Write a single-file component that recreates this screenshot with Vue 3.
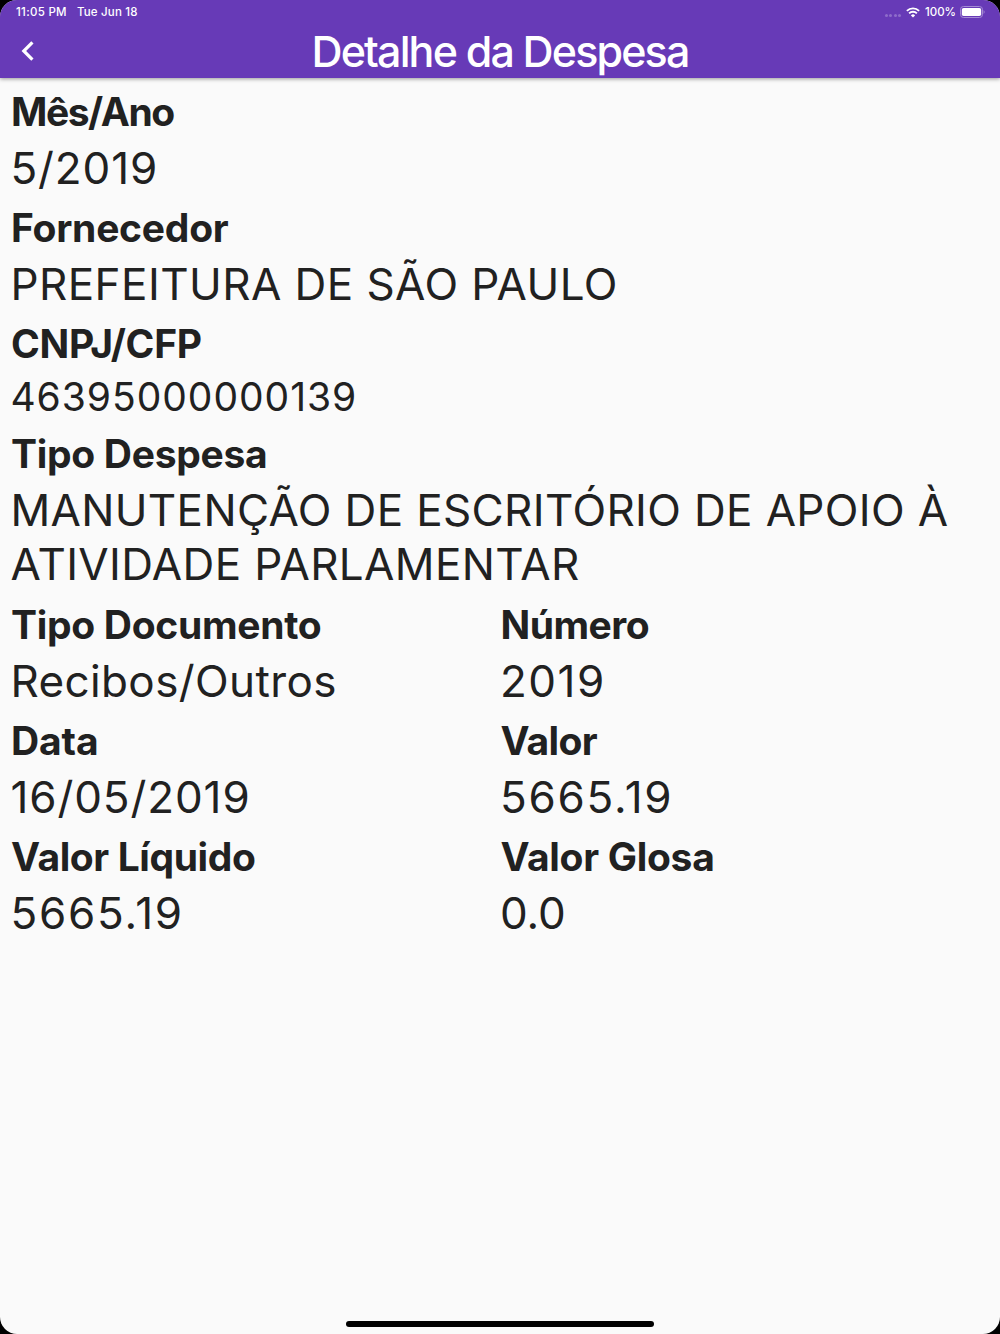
<template>
  <div class="screen">
    <header class="app-bar">
      <div class="status-bar">
        <div class="status-left">
          <span class="time">11:05 PM</span>
          <span class="date">Tue Jun 18</span>
        </div>
        <div class="status-right">
          <div class="dots"><i v-for="n in 4" :key="n"></i></div>
          <svg class="wifi" width="14" height="11" viewBox="0 0 14 11">
            <path d="M0.9 3.9 A8.7 8.7 0 0 1 13.1 3.9" />
            <path d="M3.1 6.4 A5.5 5.5 0 0 1 10.9 6.4" />
            <path class="wifi-base" d="M7 10.6 L4.9 8.4 A3 3 0 0 1 9.1 8.4 Z" />
          </svg>
          <span class="percent">100%</span>
          <svg class="battery" width="25" height="12" viewBox="0 0 25 12">
            <rect class="battery-case" x="0.5" y="0.5" width="22" height="11" rx="3" />
            <rect class="battery-fill" x="1.8" y="1.9" width="19.4" height="8.2" rx="1.8" />
            <path class="battery-tip" d="M23.6 4 Q25.6 6 23.6 8 Z" />
          </svg>
        </div>
      </div>
      <div class="toolbar">
        <button class="back" aria-label="Voltar">
          <svg width="14" height="22" viewBox="0 0 14 22">
            <path d="M12.4 2.4 L3.8 11 L12.4 19.6" />
          </svg>
        </button>
        <h1 class="title">Detalhe da Despesa</h1>
      </div>
    </header>

    <main class="details">
      <div class="row" v-for="(row, index) in rows" :key="index">
        <div class="field" v-for="field in row" :key="field.label">
          <div class="label" :style="{ letterSpacing: field.labelSpacing + 'px' }">{{ field.label }}</div>
          <div
            class="value"
            :class="{ small: field.small }"
            :style="{ letterSpacing: field.valueSpacing + 'px' }"
          >
            {{ field.value }}
          </div>
        </div>
      </div>
    </main>

    <footer class="home"><div class="home-indicator"></div></footer>
  </div>
</template>

<script setup>
const rows = [
  [{ label: 'Mês/Ano', value: '5/2019', labelSpacing: -1.45, valueSpacing: 0.9 }],
  [{ label: 'Fornecedor', value: 'PREFEITURA DE SÃO PAULO', labelSpacing: -0.25, valueSpacing: 0.44 }],
  [{ label: 'CNPJ/CFP', value: '46395000000139', small: true, labelSpacing: -0.25, valueSpacing: 0.98 }],
  [
    {
      label: 'Tipo Despesa',
      value: 'MANUTENÇÃO DE ESCRITÓRIO DE APOIO À ATIVIDADE PARLAMENTAR',
      labelSpacing: -0.3,
      valueSpacing: 0.36,
    },
  ],
  [
    { label: 'Tipo Documento', value: 'Recibos/Outros', labelSpacing: -0.3, valueSpacing: 0.38 },
    { label: 'Número', value: '2019', labelSpacing: -0.5, valueSpacing: 1.5 },
  ],
  [
    { label: 'Data', value: '16/05/2019', labelSpacing: -0.1, valueSpacing: 0.9 },
    { label: 'Valor', value: '5665.19', labelSpacing: -0.7, valueSpacing: 1.8 },
  ],
  [
    { label: 'Valor Líquido', value: '5665.19', labelSpacing: -0.4, valueSpacing: 1.8 },
    { label: 'Valor Glosa', value: '0.0', labelSpacing: -0.3, valueSpacing: 0 },
  ],
];
</script>

<style>
body {
  background: #000;
}
</style>

<style scoped>
.screen {
  display: flex;
  flex-direction: column;
  height: 1334px;
  overflow: hidden;
  border-radius: 17px;
  background: #fafafa;
  color: #212121;
  font-family: Inter, "Liberation Sans", sans-serif;
}

.app-bar {
  height: 78px;
  background: #673ab7;
  color: #fff;
  box-shadow: 0 1px 4px rgba(0, 0, 0, 0.4);
}

.status-bar {
  display: flex;
  justify-content: space-between;
  height: 24px;
  padding: 0 15px 0 16px;
  font-size: 11.5px;
  font-weight: 500;
  line-height: 24px;
}

.status-left,
.status-right,
.dots {
  display: flex;
  align-items: center;
}

.status-left {
  gap: 10px;
  letter-spacing: 0.3px;
}

.date {
  letter-spacing: 0.18px;
}

.dots {
  gap: 1.4px;
  margin: 6px 5px 0 0;
}

.dots i {
  width: 3px;
  height: 3px;
  border-radius: 50%;
  background: #8e6cca;
}

.wifi {
  margin-right: 5px;
  fill: none;
  stroke: #fff;
  stroke-width: 1.9;
}

.wifi-base {
  fill: #fff;
  stroke: none;
}

.battery {
  margin-left: 4px;
}

.battery-case {
  fill: none;
  stroke: #a48ad4;
}

.battery-fill {
  fill: #fff;
}

.battery-tip {
  fill: #a48ad4;
}

.toolbar {
  display: grid;
  grid-template-columns: 56px 1fr 56px;
  align-items: center;
  height: 54px;
}

.back {
  display: flex;
  padding: 0 0 0 20px;
  border: 0;
  background: none;
}

.back path {
  fill: none;
  stroke: #fff;
  stroke-width: 3.2;
}

.title {
  margin: 0;
  font-size: 43px;
  font-weight: 500;
  line-height: 54px;
  letter-spacing: -1.85px;
  text-align: center;
  white-space: nowrap;
}

.details {
  flex: 1;
  padding: 9px 11px;
}

.row {
  display: flex;
}

.field {
  flex: 1;
  padding-bottom: 8.15px;
}

.field + .field {
  padding-left: 1px;
}

.label {
  height: 57px;
  margin-bottom: -3px;
  font-size: 39px;
  font-weight: 700;
  line-height: 49px;
}

.value {
  margin-left: -0.6px;
  font-size: 44px;
  font-weight: 370;
  line-height: 54px;
}

.small {
  font-size: 39px;
  line-height: 48px;
}

.home {
  display: flex;
  justify-content: center;
  padding-bottom: 7px;
}

.home-indicator {
  width: 308px;
  height: 6px;
  border-radius: 3px;
  background: #000;
}
</style>
